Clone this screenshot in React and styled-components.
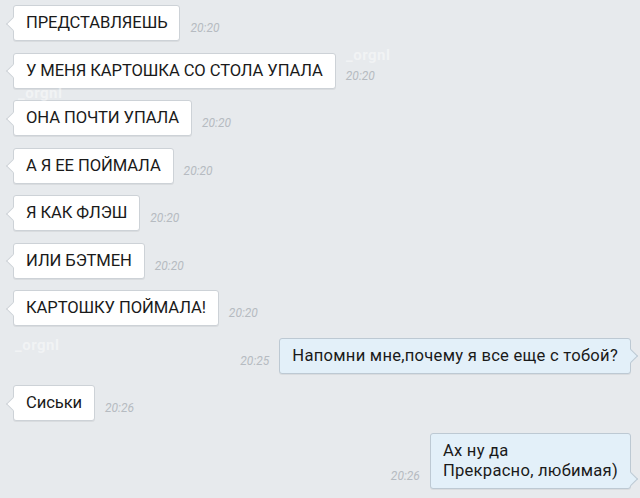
import React from 'react';
import styled, { createGlobalStyle } from 'styled-components';

const messages = [
  { text: 'ПРЕДСТАВЛЯЕШЬ', time: '20:20' },
  { text: 'У МЕНЯ КАРТОШКА СО СТОЛА УПАЛА', time: '20:20' },
  { text: 'ОНА ПОЧТИ УПАЛА', time: '20:20' },
  { text: 'А Я ЕЕ ПОЙМАЛА', time: '20:20' },
  { text: 'Я КАК ФЛЭШ', time: '20:20' },
  { text: 'ИЛИ БЭТМЕН', time: '20:20' },
  { text: 'КАРТОШКУ ПОЙМАЛА!', time: '20:20' },
  { text: 'Напомни мне,почему я все еще с тобой?', time: '20:25', out: true },
  { text: 'Сиськи', time: '20:26' },
  { text: 'Ах ну да\nПрекрасно, любимая)', time: '20:26', out: true, tailBottom: 4 }
];

const App = () => (
  <>
    <GlobalStyle />
    <Chat>
      {messages.map((m, i) => (
        <Row key={i} $out={m.out}>
          {m.out && <Time>{m.time}</Time>}
          <Bubble $out={m.out} $tailBottom={m.tailBottom}>
            {m.text}
          </Bubble>
          {!m.out && <Time>{m.time}</Time>}
        </Row>
      ))}

      <Watermark $x={346} $y={46}>_orgnl</Watermark>
      <Watermark $x={18} $y={84}>_orgnl</Watermark>
      <Watermark $x={15} $y={336}>_orgnl</Watermark>
    </Chat>
  </>
);

export default App;

const GlobalStyle = createGlobalStyle`
  html, body {
    margin: 0;
    background: #e7eaed;
    overflow: hidden;
  }
`;

const Chat = styled.div`
  position: relative;
  display: flex;
  flex-direction: column;
  gap: 11.5px;
  width: 640px;
  height: 498px;
  box-sizing: border-box;
  padding: 5px 9px 0 13px;
  font-family: Roboto, 'Liberation Sans', sans-serif;
`;

const Row = styled.div`
  display: flex;
  align-items: flex-end;
  justify-content: ${(p) => (p.$out ? 'flex-end' : 'flex-start')};
  gap: 10px;
`;

const Bubble = styled.div`
  position: relative;
  padding: 7px 12px;
  font-size: 16.6px;
  line-height: 20px;
  letter-spacing: ${(p) => (p.$out ? '0.25px' : '-0.1px')};
  color: #1a1a1a;
  white-space: pre-line;
  background: ${(p) => (p.$out ? '#e3f0f9' : '#ffffff')};
  border: 1px solid ${(p) => (p.$out ? '#bdc9d3' : '#cdd2d7')};
  border-radius: 3px;
  box-shadow: 0 1px 0 rgba(0, 0, 0, 0.06);

  &::before {
    content: '';
    position: absolute;
    width: 9px;
    height: 9px;
    background: inherit;
    border: 1px solid ${(p) => (p.$out ? '#bdc9d3' : '#cdd2d7')};
    border-width: ${(p) => (p.$out ? '1px 1px 0 0' : '0 0 1px 1px')};
    bottom: ${(p) => (p.$tailBottom != null ? `${p.$tailBottom}px` : 'calc(50% - 5.5px)')};
    ${(p) => (p.$out ? 'right: -6px;' : 'left: -6px;')}
    transform: rotate(45deg);
  }
`;

const Time = styled.span`
  margin-bottom: 6px;
  font-size: 12px;
  font-style: italic;
  color: #b6bbc1;
  line-height: 14px;
`;

const Watermark = styled.span`
  position: absolute;
  left: ${(p) => p.$x}px;
  top: ${(p) => p.$y}px;
  font-size: 15px;
  font-weight: bold;
  color: rgba(255, 255, 255, 0.45);
  letter-spacing: 0.5px;
  pointer-events: none;
`;
